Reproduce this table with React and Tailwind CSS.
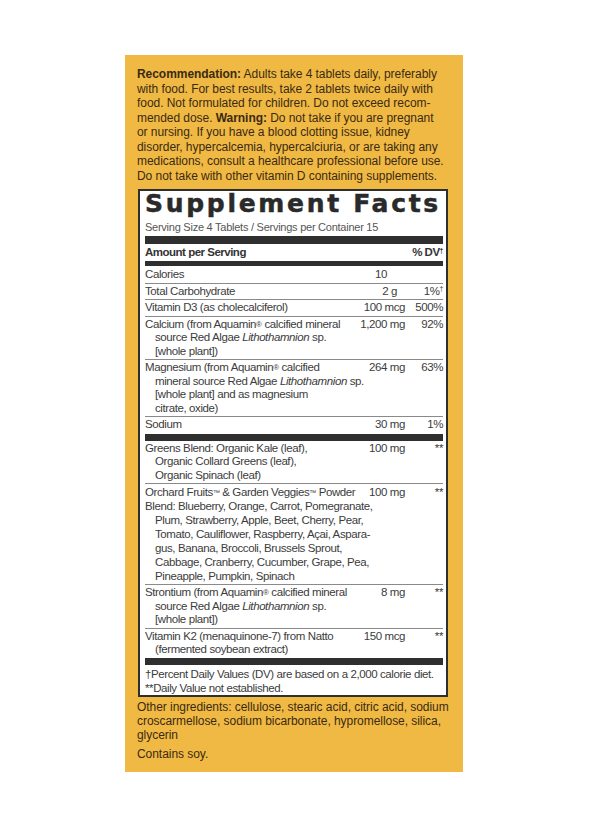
import React from 'react'

const sans = "font-['Liberation_Sans',Arial,sans-serif]"

function Row({ lines, amount, dv, amountClass = '', border = true, leading = 'leading-[13.5px]', flush = 1 }) {
  return (
    <div className={`grid grid-cols-[minmax(0,1fr)_64px_38px] py-[1px] ${leading} ${border ? 'border-b border-[#8a8a8a]' : ''}`}>
      <div>
        {lines.map((l, i) => (
          <div key={i} className={i >= flush ? 'pl-[10px]' : ''}>{l}</div>
        ))}
      </div>
      <div className={`text-right ${amountClass}`}>{amount}</div>
      <div className="text-right">{dv}</div>
    </div>
  )
}

const Reg = () => <sup className="text-[8px] relative -top-[1px]">®</sup>
const Tm = () => <sup className="text-[7px] relative -top-[1px]">™</sup>

export default function App() {
  return (
    <div className={`h-[839px] w-[600px] overflow-hidden bg-white pt-[55px] pl-[125px] ${sans}`}>
      <div className="w-[338px] h-[717px] bg-[#f0b944] pl-[12px] pr-[15px] pt-[12px] text-[#3b2a12] whitespace-nowrap">
        {/* Recommendation block */}
        <div className="text-[12px] leading-[14.5px] tracking-[-0.05px]">
          <div><b>Recommendation:</b> Adults take 4 tablets daily, preferably</div>
          <div>with food. For best results, take 2 tablets twice daily with</div>
          <div>food. Not formulated for children. Do not exceed recom-</div>
          <div>mended dose. <b>Warning:</b> Do not take if you are pregnant</div>
          <div>or nursing. If you have a blood clotting issue, kidney</div>
          <div>disorder, hypercalcemia, hypercalciuria, or are taking any</div>
          <div>medications, consult a healthcare professional before use.</div>
          <div>Do not take with other vitamin D containing supplements.</div>
        </div>

        {/* Supplement Facts panel */}
        <div className="mt-[6px] ml-[1px] w-[310px] bg-white border-2 border-[#2f2f2f] pl-[5px] pr-[3px] text-[11.5px] tracking-[-0.4px] text-[#3c3c3c]">
          <div className="font-['DejaVu_Sans',sans-serif] font-bold text-[25px] leading-[26px] tracking-[2.7px] text-[#2a2a2a] [-webkit-text-stroke:0.5px_#2a2a2a]">
            Supplement Facts
          </div>
          <div className="mt-[4px] leading-[13px] text-[11px] tracking-[-0.25px] text-[#555]">Serving Size 4 Tablets / Servings per Container 15</div>
          <div className="mt-[2px] h-[8px] bg-[#2f2f2f]" />
          <div className="mt-[1px] flex justify-between font-bold leading-[14px] tracking-[-0.5px] text-[#333]">
            <span>Amount per Serving</span>
            <span>% DV<sup className="text-[7px]">†</sup></span>
          </div>
          <div className="mt-[2px] h-[5px] bg-[#2f2f2f]" />

          <div className="pt-[1px]">
            <Row lines={['Calories']} amount="10" amountClass="pr-[18px]" />
          </div>
          <Row lines={['Total Carbohydrate']} amount="2 g" amountClass="pr-[8px]" dv={<span>1%<sup className="text-[7px]">†</sup></span>} />
          <Row lines={['Vitamin D3 (as cholecalciferol)']} amount="100 mcg" dv="500%" />
          <Row
            lines={[
              <span>Calcium (from Aquamin<Reg /> calcified mineral</span>,
              <span>source Red Algae <i>Lithothamnion</i> sp.</span>,
              '[whole plant])',
            ]}
            amount="1,200 mg"
            dv="92%"
          />
          <Row
            lines={[
              <span>Magnesium (from Aquamin<Reg /> calcified</span>,
              <span>mineral source Red Algae <i>Lithothamnion</i> sp.</span>,
              '[whole plant] and as magnesium',
              'citrate, oxide)',
            ]}
            amount="264 mg"
            dv="63%"
          />
          <Row lines={['Sodium']} amount="30 mg" dv="1%" border={false} />
          <div className="mt-[1px] h-[7px] bg-[#2f2f2f]" />

          <Row
            lines={['Greens Blend: Organic Kale (leaf),', 'Organic Collard Greens (leaf),', 'Organic Spinach (leaf)']}
            amount="100 mg"
            dv="**"
          />
          <Row
            leading="leading-[14px]"
            flush={2}
            lines={[
              <span>Orchard Fruits<Tm /> &amp; Garden Veggies<Tm /> Powder</span>,
              'Blend: Blueberry, Orange, Carrot, Pomegranate,',
              'Plum, Strawberry, Apple, Beet, Cherry, Pear,',
              'Tomato, Cauliflower, Raspberry, Açai, Aspara-',
              'gus, Banana, Broccoli, Brussels Sprout,',
              'Cabbage, Cranberry, Cucumber, Grape, Pea,',
              'Pineapple, Pumpkin, Spinach',
            ]}
            amount="100 mg"
            dv="**"
          />
          <Row
            lines={[
              <span>Strontium (from Aquamin<Reg /> calcified mineral</span>,
              <span>source Red Algae <i>Lithothamnion</i> sp.</span>,
              '[whole plant])',
            ]}
            amount="8 mg"
            dv="**"
          />
          <Row
            lines={['Vitamin K2 (menaquinone-7) from Natto', '(fermented soybean extract)']}
            amount="150 mcg"
            dv="**"
            border={false}
          />
          <div className="h-[7px] bg-[#2f2f2f]" />
          <div className="pt-[2px] leading-[14px]">
            <div>†Percent Daily Values (DV) are based on a 2,000 calorie diet.</div>
            <div>**Daily Value not established.</div>
          </div>
        </div>

        {/* Other ingredients */}
        <div className="mt-[3px] text-[12px] leading-[14px] tracking-[-0.05px]">
          <div>Other ingredients: cellulose, stearic acid, citric acid, sodium</div>
          <div>croscarmellose, sodium bicarbonate, hypromellose, silica,</div>
          <div>glycerin</div>
          <div className="mt-[5px]">Contains soy.</div>
        </div>
      </div>
    </div>
  )
}
